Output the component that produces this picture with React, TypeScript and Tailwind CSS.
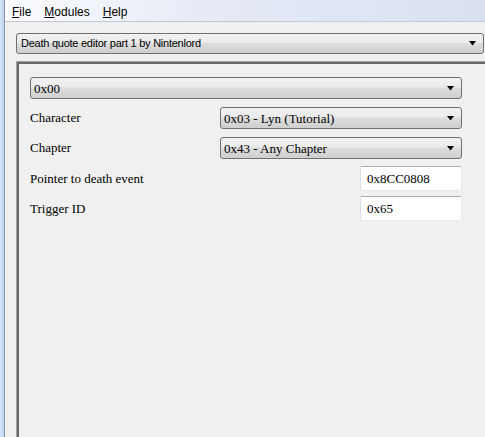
const Arrow = () => (
  <svg width="8" height="5" viewBox="0 0 8 5" className="shrink-0">
    <path d="M0 0h7L3.5 4.5z" fill="#000" />
  </svg>
);

const Combo = ({ text, className, sans }: { text: string; className?: string; sans?: boolean }) => (
  <div
    className={`flex items-center justify-between rounded-[3px] border border-[#707070] bg-[linear-gradient(#f2f2f2,#ebebeb_45%,#dddddd_50%,#cfcfcf)] pl-[3px] pr-[6px] ${
      sans
        ? "font-['Liberation_Sans',sans-serif] text-[11px] tracking-[-0.25px]"
        : "font-['Liberation_Serif',serif] text-[13px]"
    } text-black ${className ?? ""}`}
  >
    <span className="whitespace-nowrap leading-none">{text}</span>
    <Arrow />
  </div>
);

const TextBox = ({ value }: { value: string }) => (
  <div className="flex h-[25px] w-[102px] items-center rounded-[2px] border border-t-[#abadb3] border-l-[#dbdfe6] border-r-[#e3e9ef] border-b-[#e3e9ef] bg-white pl-[6px] font-['Liberation_Serif',serif] text-[13px] text-black">
    {value}
  </div>
);

const rows = [
  { label: "Character", value: "0x03 - Lyn (Tutorial)" },
  { label: "Chapter", value: "0x43 - Any Chapter" },
];

export default function App() {
  return (
    <div className="flex h-[437px] w-[485px] overflow-hidden bg-[#f0f0f0]">
      <div className="w-[4px] shrink-0 bg-[linear-gradient(90deg,#d6e6f7,#bcd3ee)]" />
      <div className="w-px shrink-0 bg-[#8a97a8]" />
      <div className="flex min-w-0 flex-1 flex-col">
        <div className="flex h-[22px] items-center gap-[13px] border-b border-[#c3c9d4] bg-[linear-gradient(90deg,#fafbfd,#e6ebf6_40%,#d8e0f1)] pl-[7px] pt-[3px] font-['Liberation_Sans',sans-serif] text-[12px] text-black">
          <span>
            <u>F</u>ile
          </span>
          <span>
            <u>M</u>odules
          </span>
          <span>
            <u>H</u>elp
          </span>
        </div>
        <div className="pl-[11px] pt-[11px]">
          <Combo text="Death quote editor part 1 by Nintenlord" sans className="h-[21px] w-[468px] pl-[4px]" />
        </div>
        <div className="ml-[11px] mt-[7px] flex-1 border-l border-t border-[#a0a0a0]">
          <div className="h-full border-l-2 border-t-2 border-[#696969] pl-[11px] pt-[13px]">
            <div className="w-[432px]">
              <Combo text="0x00" className="h-[22px]" />
              {rows.map((r) => (
                <div key={r.label} className="mt-[8px] flex h-[22px] items-center justify-between">
                  <span className="font-['Liberation_Serif',serif] text-[13px] text-black">{r.label}</span>
                  <Combo text={r.value} className="h-[22px] w-[242px]" />
                </div>
              ))}
              <div className="mt-[7px] flex items-center justify-between">
                <span className="font-['Liberation_Serif',serif] text-[13px] text-black">Pointer to death event</span>
                <TextBox value="0x8CC0808" />
              </div>
              <div className="mt-[5px] flex items-center justify-between">
                <span className="font-['Liberation_Serif',serif] text-[13px] text-black">Trigger ID</span>
                <TextBox value="0x65" />
              </div>
            </div>
          </div>
        </div>
      </div>
    </div>
  );
}
